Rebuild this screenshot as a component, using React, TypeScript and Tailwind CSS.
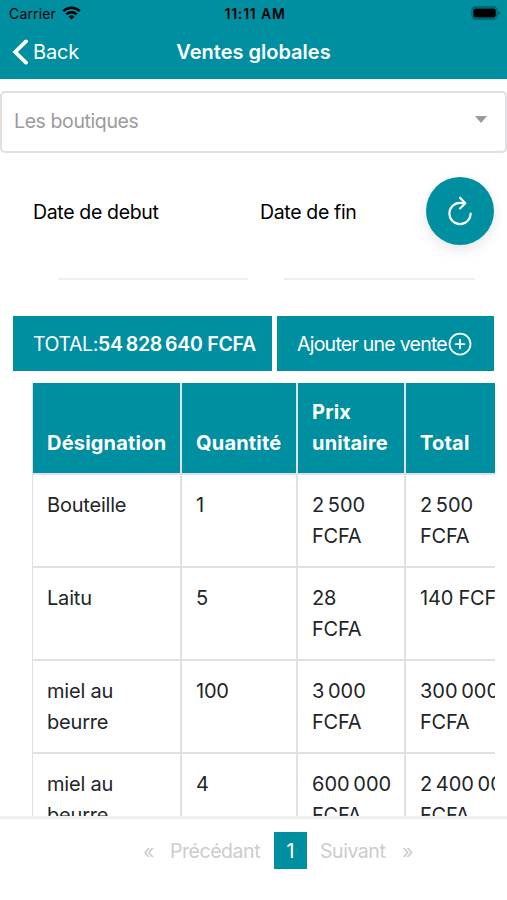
import React from "react";
import { IoAddCircleOutline, IoRefreshOutline } from "react-icons/io5";

type Sale = {
    name: string;
    quantity: string;
    price: string[];
    total: string[];
};

const sales: Sale[] = [
    { name: "Bouteille", quantity: "1", price: ["2\u202f500", "FCFA"], total: ["2\u202f500", "FCFA"] },
    { name: "Laitu", quantity: "5", price: ["28", "FCFA"], total: ["140 FCFA"] },
    { name: "miel au beurre", quantity: "100", price: ["3\u202f000", "FCFA"], total: ["300\u202f000", "FCFA"] },
    { name: "miel au beurre", quantity: "4", price: ["600\u202f000", "FCFA"], total: ["2\u202f400\u202f000", "FCFA"] },
];

function StatusBar() {
    return (
        <div className="flex h-[27px] items-center justify-between pl-[9px] pr-[6px] text-black">
            <div className="flex flex-1 items-center gap-[6px]">
                <span className="text-[14px] tracking-[0.15px]">Carrier</span>
                <svg width="19" height="14" viewBox="0 0 19 14" fill="none" stroke="currentColor" className="mb-[2px]">
                    <path d="M1.2 5.2a11.8 11.8 0 0 1 16.6 0" strokeWidth="2.6" />
                    <path d="M4.3 8.4a7.4 7.4 0 0 1 10.4 0" strokeWidth="2.4" />
                    <path d="M9.5 13.6 6.5 10.6a4.3 4.3 0 0 1 6 0z" fill="currentColor" stroke="none" />
                </svg>
            </div>
            <span className="text-[14px] font-semibold tracking-[0.8px]">11:11 AM</span>
            <div className="flex flex-1 justify-end">
                <svg width="30" height="14" viewBox="0 0 30 14" className="mb-px">
                    <rect x="1" y="1" width="25" height="12" rx="3.5" fill="none" stroke="#000" strokeOpacity="0.35" strokeWidth="1.3" />
                    <rect x="2.4" y="2.6" width="22.3" height="8.8" rx="2" fill="#000" />
                    <path d="M27.4 5v4c1-.4 1.6-1.2 1.6-2s-.6-1.6-1.6-2z" fill="#000" fillOpacity="0.4" />
                </svg>
            </div>
        </div>
    );
}

function Header() {
    return (
        <header className="h-[79px] bg-[#008fa1]">
            <StatusBar />
            <div className="flex h-[50px] items-center pl-[12px] pr-[12px] text-white">
                <div className="flex flex-1 items-center gap-[4px]">
                    <svg width="17" height="26" viewBox="0 0 17 26" fill="none" stroke="currentColor" strokeWidth="3.8">
                        <path d="M14 2.4 3.2 13 14 23.600" strokeLinecap="round" />
                    </svg>
                    <span className="text-[20px] tracking-[-0.2px]">Back</span>
                </div>
                <h1 className="text-[20px] font-semibold">Ventes globales</h1>
                <div className="flex-1" />
            </div>
        </header>
    );
}

function Filters() {
    return (
        <div className="flex h-[126px] pl-[33px]">
            <div className="flex w-[227px] flex-col">
                <span className="mt-[23px] h-6 text-[19.5px] leading-6 tracking-[-0.35px]">Date de debut</span>
                <div className="ml-[25px] mt-[54px] h-[2px] w-[190px] bg-[#efefef]" />
            </div>
            <div className="flex w-[166px] flex-col">
                <span className="mt-[23px] h-6 text-[19.5px] leading-6 tracking-[-0.35px]">Date de fin</span>
                <div className="ml-[24px] mt-[54px] h-[2px] w-[191px] bg-[#efefef]" />
            </div>
            <button className="flex h-[68px] w-[68px] items-center justify-center rounded-full bg-[#008fa1] text-white shadow-[0_5px_14px_rgba(0,0,0,0.1)]">
                <IoRefreshOutline size={34} />
            </button>
        </div>
    );
}

function Lines({ lines }: { lines: string[] }) {
    return (
        <>
            {lines.map((line) => (
                <div key={line} className="whitespace-nowrap">{line}</div>
            ))}
        </>
    );
}

function SalesTable() {
    return (
        <div className="ml-8 mr-[12px] mt-3 min-h-0 flex-1 overflow-hidden">
            <table className="w-[560px] table-fixed border-separate border-spacing-0 border-l border-[#dee2e6] text-[20px] leading-[30.5px] tracking-[-0.2px] text-[#212529]">
                <colgroup>
                    <col className="w-[149px]" />
                    <col className="w-[116px]" />
                    <col className="w-[108px]" />
                    <col />
                </colgroup>
                <thead>
                    <tr className="h-[92px] bg-[#008fa1] text-left align-bottom tracking-[0.2px] text-white">
                        <th className="border-b-2 border-r-2 border-[#dee2e6] pb-[15px] pl-[14px] font-bold">Désignation</th>
                        <th className="border-b-2 border-r-2 border-[#dee2e6] pb-[15px] pl-[14px] font-bold">Quantité</th>
                        <th className="border-b-2 border-r-2 border-[#dee2e6] pb-[15px] pl-[14px] font-bold">Prix unitaire</th>
                        <th className="border-b-2 border-[#dee2e6] pb-[15px] pl-[14px] font-bold">Total</th>
                    </tr>
                </thead>
                <tbody>
                    {sales.map((sale, i) => (
                        <tr key={i} className="h-[93px] align-top">
                            <td className="border-b-2 border-r-2 border-[#dee2e6] pl-[14px] pr-5 pt-[15px]">{sale.name}</td>
                            <td className="border-b-2 border-r-2 border-[#dee2e6] pl-[14px] pt-[15px]">{sale.quantity}</td>
                            <td className="border-b-2 border-r-2 border-[#dee2e6] pl-[14px] pt-[15px]">
                                <Lines lines={sale.price} />
                            </td>
                            <td className="border-b-2 border-[#dee2e6] pl-[14px] pt-[15px]">
                                <Lines lines={sale.total} />
                            </td>
                        </tr>
                    ))}
                </tbody>
            </table>
        </div>
    );
}

function Pagination() {
    return (
        <footer className="flex h-[84px] border-t-[3px] border-[#f0f0f0] pl-[143px] pt-[13px] text-[19.5px] text-[#cccccc]">
            <div className="flex h-[37px] items-center">
                <span className="w-[27px] pt-[3px]">«</span>
                <span className="w-[104px] pt-[3px] tracking-[-0.45px]">Précédant</span>
                <span className="flex h-[37px] w-[33px] items-center justify-center bg-[#008fa1] pt-[3px] text-white">1</span>
                <span className="ml-[13px] w-[82px] pt-[3px] tracking-[-0.45px]">Suivant</span>
                <span className="pt-[3px]">»</span>
            </div>
        </footer>
    );
}

export default function App() {
    return (
        <div className="flex h-[900px] w-[507px] flex-col overflow-hidden bg-white font-['Inter','Liberation_Sans',sans-serif] text-black">
            <Header />
            <div className="mt-3 flex h-[62px] shrink-0 items-center justify-between rounded-[5px] border-2 border-[#dfe0e6] pl-[12px] pr-[17px]">
                <span className="text-[19.5px] tracking-[-0.4px] text-[#9b9b9b]">Les boutiques</span>
                <svg width="14" height="7" viewBox="0 0 14 7" className="mb-[6px]">
                    <path d="M1 0h12L7 7z" fill="#999" />
                </svg>
            </div>
            <div className="mt-6">
                <Filters />
            </div>
            <div className="mt-[13px] flex h-[55px] shrink-0 gap-[5px] pl-[13px] text-[19.5px] text-white">
                <div className="flex w-[259px] items-center whitespace-nowrap bg-[#008fa1] pl-5 pt-[3px] tracking-[-0.4px]">
                    TOTAL:<b className="font-semibold tracking-[-0.25px]">54&#8239;828&#8239;640 FCFA</b>
                </div>
                <button className="flex w-[217px] items-center whitespace-nowrap bg-[#008fa1] pl-5 tracking-[-0.75px]">
                    <span className="pt-[3px]">Ajouter une vente</span>
                    <IoAddCircleOutline size={28} className="-ml-px shrink-0" />
                </button>
            </div>
            <SalesTable />
            <Pagination />
        </div>
    );
}
